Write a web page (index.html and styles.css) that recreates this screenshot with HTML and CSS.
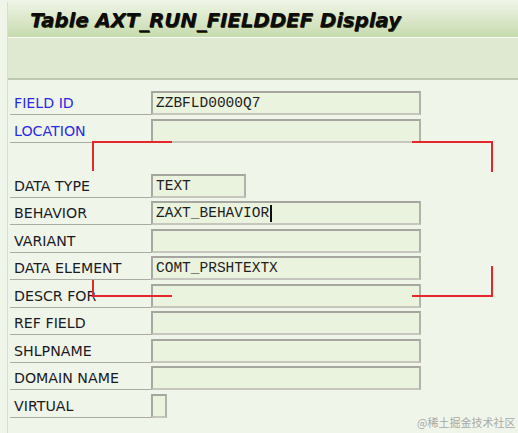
FILE: index.html
```html
<!DOCTYPE html>
<html>
<head>
<meta charset="utf-8">
<link rel="stylesheet" href="styles.css">
</head>
<body>
<div class="frame">
  <header class="titlebar"><h1>Table AXT_RUN_FIELDDEF Display</h1></header>
  <div class="toolbar"></div>
  <main class="form">
    <div class="row"><span class="label key">FIELD ID</span><span class="field">ZZBFLD0000Q7</span></div>
    <div class="row"><span class="label key">LOCATION</span><span class="field"></span></div>
    <div class="row spacer"></div>
    <div class="row"><span class="label">DATA TYPE</span><span class="field short">TEXT</span></div>
    <div class="row"><span class="label">BEHAVIOR</span><span class="field">ZAXT_BEHAVIOR<i class="caret"></i></span></div>
    <div class="row"><span class="label">VARIANT</span><span class="field"></span></div>
    <div class="row"><span class="label">DATA ELEMENT</span><span class="field">COMT_PRSHTEXTX</span></div>
    <div class="row"><span class="label">DESCR FOR</span><span class="field"></span></div>
    <div class="row"><span class="label">REF FIELD</span><span class="field"></span></div>
    <div class="row"><span class="label">SHLPNAME</span><span class="field"></span></div>
    <div class="row"><span class="label">DOMAIN NAME</span><span class="field"></span></div>
    <div class="row"><span class="label">VIRTUAL</span><span class="field check"></span></div>
  </main>
</div>
<div class="mark tl"></div>
<div class="mark tr"></div>
<div class="mark bl"></div>
<div class="mark br"></div>
<div class="watermark">@稀土掘金技术社区</div>
</body>
</html>
```
FILE: styles.css
```css
html, body {
  margin: 0;
  padding: 0;
}
body {
  width: 518px;
  height: 433px;
  overflow: hidden;
  background: #f0f5ea;
  position: relative;
  font-family: "DejaVu Sans", Verdana, sans-serif;
}
.frame {
  margin-left: 7px;
  height: 433px;
  border-left: 1px solid #d6dfcc;
}
.titlebar {
  height: 35px;
  margin-top: 2px;
  background: linear-gradient(#eef4e4, #c6dbae);
  border-bottom: 1px solid #f6faf0;
  display: flex;
  align-items: center;
  padding-left: 22px;
}
.titlebar h1 {
  margin: 0;
  font-size: 20px;
  font-weight: bold;
  font-style: italic;
  color: #0c0c0c;
  letter-spacing: -0.2px;
  text-shadow: 0.5px 0.5px 0 #3a3a10;
}
.toolbar {
  height: 40px;
  background: #dfe8d1;
  border-bottom: 2px solid #bcc8b0;
}
.form {
  padding-top: 11px;
  padding-left: 2px;
  display: flex;
  flex-direction: column;
}
.row {
  height: 27.5px;
  display: flex;
  align-items: flex-start;
}
.label {
  height: 24px;
  padding-left: 4px;
  box-sizing: border-box;
  width: 141px;
  border-bottom: 1px solid #a8aca2;
  font-size: 14.2px;
  line-height: 25px;
  color: #1a1a24;
  white-space: nowrap;
}
.label.key {
  color: #2b2be6;
}
.field {
  box-sizing: border-box;
  width: 270px;
  height: 24px;
  background: #eaf3de;
  border: 2px solid #b2b2aa;
  border-top-color: #a6a6a0;
  border-left-color: #a8a8a2;
  border-bottom-color: #c6c6be;
  font-family: "Liberation Mono", "Courier New", monospace;
  font-size: 14.5px;
  line-height: 20px;
  padding-left: 3px;
  color: #1e1e1e;
  white-space: nowrap;
  display: flex;
  align-items: center;
}
.field.short {
  width: 95px;
}
.field.check {
  width: 16px;
}
.caret {
  display: inline-block;
  width: 2px;
  height: 17px;
  background: #101010;
  margin-left: 1px;
}
.mark {
  position: absolute;
  border-color: #e5262b;
  border-style: solid;
  border-width: 0;
  box-sizing: border-box;
}
.mark.tl {
  left: 92px;
  top: 141px;
  width: 80px;
  height: 30px;
  border-top-width: 2px;
  border-left-width: 2px;
}
.mark.tr {
  left: 412px;
  top: 141px;
  width: 81px;
  height: 31px;
  border-top-width: 2px;
  border-right-width: 2px;
}
.mark.bl {
  left: 92px;
  top: 280px;
  width: 80px;
  height: 17px;
  border-bottom-width: 2px;
  border-left-width: 2px;
}
.mark.br {
  left: 412px;
  top: 266px;
  width: 81px;
  height: 31px;
  border-bottom-width: 2px;
  border-right-width: 2px;
}
.watermark {
  position: absolute;
  left: 417px;
  top: 414px;
  font-family: "Noto Sans CJK SC", sans-serif;
  font-size: 11px;
  color: #a8aaa6;
  white-space: nowrap;
}
```
